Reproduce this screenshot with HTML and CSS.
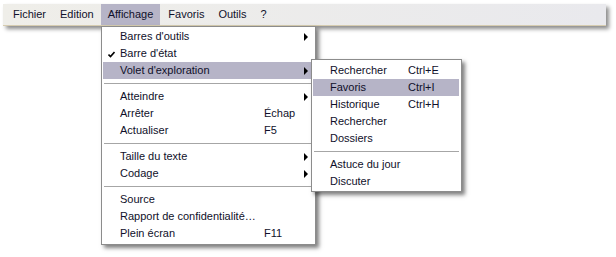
FILE: index.html
```html
<!DOCTYPE html>
<html lang="fr">
<head>
    <meta charset="UTF-8">
    <title>Affichage</title>
    <link rel="stylesheet" href="styles.css">
</head>
<body>

    <div class="screen">
        <div class="menubar">
            <span class="top-item">Fichier</span>
            <span class="top-item">Edition</span>
            <span class="top-item open">Affichage</span>
            <span class="top-item">Favoris</span>
            <span class="top-item">Outils</span>
            <span class="top-item">?</span>
        </div>

        <!-- menu Affichage -->
        <div class="menu main-menu">
            <div class="item sub"><span class="label">Barres d'outils</span></div>
            <div class="item">
                <svg class="check" width="7" height="7" viewBox="0 0 7 7"><path d="M0.5 3.5 L2.5 5.5 L6.5 1" fill="none" stroke="#000" stroke-width="1.6"/></svg>
                <span class="label">Barre d'état</span>
            </div>
            <div class="item sub active"><span class="label">Volet d'exploration</span></div>
            <div class="sep"></div>
            <div class="item sub"><span class="label">Atteindre</span></div>
            <div class="item"><span class="label">Arrêter</span><span class="key">Échap</span></div>
            <div class="item"><span class="label">Actualiser</span><span class="key">F5</span></div>
            <div class="sep"></div>
            <div class="item sub"><span class="label">Taille du texte</span></div>
            <div class="item sub"><span class="label">Codage</span></div>
            <div class="sep"></div>
            <div class="item"><span class="label">Source</span></div>
            <div class="item"><span class="label">Rapport de confidentialité…</span></div>
            <div class="item"><span class="label">Plein écran</span><span class="key">F11</span></div>
        </div>

        <!-- sous-menu Volet d'exploration -->
        <div class="menu side-menu">
            <div class="item"><span class="label">Rechercher</span><span class="key">Ctrl+E</span></div>
            <div class="item active"><span class="label">Favoris</span><span class="key">Ctrl+I</span></div>
            <div class="item"><span class="label">Historique</span><span class="key">Ctrl+H</span></div>
            <div class="item"><span class="label">Rechercher</span></div>
            <div class="item"><span class="label">Dossiers</span></div>
            <div class="sep"></div>
            <div class="item"><span class="label">Astuce du jour</span></div>
            <div class="item"><span class="label">Discuter</span></div>
        </div>
    </div>

</body>
</html>
```

FILE: styles.css
```css
body {
    margin: 0;
    background-color: #fff;
    font-family: "Liberation Sans", Arial, sans-serif;
    font-size: 11px;
    color: #10102a;
}

.screen {
    position: relative;
    width: 616px;
    height: 257px;
}

.menubar {
    position: absolute;
    left: 3px;
    top: 4px;
    width: 600px;
    height: 21px;
    padding-left: 3px;
    box-sizing: content-box;
    display: flex;
    background: linear-gradient(to right, #efeee9, #e9e9ed);
    border-bottom: 1px solid #d6ccb0;
    box-shadow: 3px 3px 4px rgba(0, 0, 0, 0.45);
}

.top-item {
    padding: 0 7px;
    line-height: 21px;
}

.top-item.open {
    background-color: #b6b4c7;
    margin-right: 1px;
}

.menu {
    position: absolute;
    background-color: #fff;
    border: 1px solid #8c8c8c;
    box-shadow: 3px 3px 4px rgba(0, 0, 0, 0.5);
}

.main-menu {
    left: 101px;
    top: 26px;
    width: 211px;
    padding: 1px 1px 2px 1px;
}

.side-menu {
    left: 311px;
    top: 59px;
    width: 146px;
    padding: 2px 2px 1px 1px;
}

.item {
    position: relative;
    display: flex;
    height: 17px;
    line-height: 17px;
    padding-left: 17px;
    white-space: nowrap;
}

.item.active {
    background-color: #b6b4c7;
}

.main-menu .label {
    width: 144px;
}

.side-menu .label {
    width: 78px;
}

.check {
    position: absolute;
    left: 5px;
    top: 6px;
}

.sub::after {
    content: "";
    position: absolute;
    right: 6px;
    top: 5px;
    border-left: 4px solid #000;
    border-top: 4px solid transparent;
    border-bottom: 4px solid transparent;
}

.sep {
    height: 1px;
    margin: 4px 1px 4px 1px;
    background-color: #a6a6a6;
}

.side-menu .sep {
    margin: 4px 0 4px 1px;
}
```
